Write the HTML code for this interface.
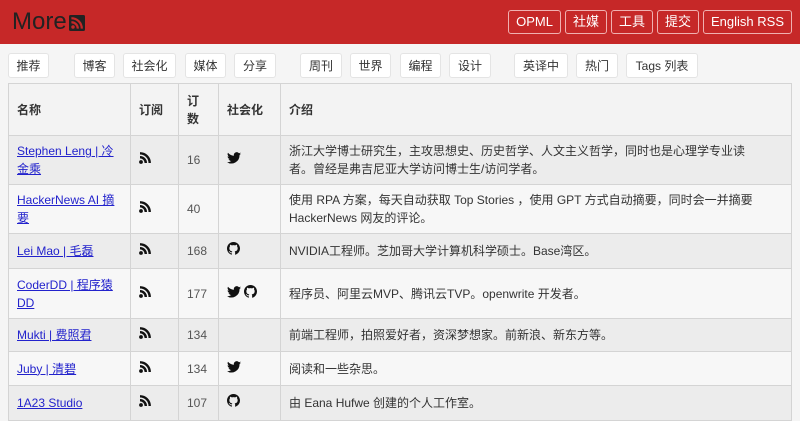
<!DOCTYPE html>
<html><head><meta charset="utf-8">
<style>
*{box-sizing:border-box;margin:0;padding:0}
body{width:800px;height:419px;overflow:hidden;background:#f5f5f5;font-family:"Liberation Sans","Noto Sans CJK SC",sans-serif;font-size:12px;color:#333}
.top{height:44px;background:#c62828;position:relative}
.logo{position:absolute;left:12px;top:7px;font-size:24px;color:#222;display:flex;align-items:center;line-height:30px}
.logo svg{margin-left:2px;margin-top:2px}
.nav{position:absolute;right:8px;top:10px;display:flex;gap:4px}
.nav span{border:1px solid #f0b0b0;border-radius:3px;color:#fff;height:24px;line-height:22px;padding:0 7px;font-size:13px}
.tags{position:absolute;top:53px;left:0;width:800px;height:26px}
.tags span{position:absolute;top:0;height:25px;line-height:24px;background:#fff;border:1px solid #e4e4e4;border-radius:3px;text-align:center;font-size:12px;color:#333}
table{position:absolute;left:8px;top:83px;width:784px;border-collapse:collapse;table-layout:fixed}
td,th{border:1px solid #d4d4d4;padding:0 8px;vertical-align:middle;text-align:left;line-height:18px}
td:last-child{padding-right:30px}
th{font-weight:bold;background:#f3f3f3;height:52px}
tr:nth-child(even) td{background:#ececec}
tr:nth-child(odd) td{background:#f7f7f7}
a{text-decoration:underline;color:#2222cc}
.n{color:#555}
</style></head><body>
<div class="top">
<div class="logo">More<svg width="16" height="16" viewBox="0 0 20 20"><rect width="20" height="20" rx="2" fill="#222"/><circle cx="5" cy="15" r="2.2" fill="#c62828"/><path d="M3 9a8 8 0 0 1 8 8M3 4a13 13 0 0 1 13 13" stroke="#c62828" stroke-width="2.8" fill="none"/></svg></div>
<div class="nav"><span>OPML</span><span>社媒</span><span>工具</span><span>提交</span><span>English RSS</span></div>
</div>
<div class="tags">
<span style="left:8px;width:41px">推荐</span>
<span style="left:74px;width:41px">博客</span>
<span style="left:123px;width:53px">社会化</span>
<span style="left:185px;width:41px">媒体</span>
<span style="left:234px;width:42px">分享</span>
<span style="left:300px;width:42px">周刊</span>
<span style="left:350px;width:41px">世界</span>
<span style="left:400px;width:41px">编程</span>
<span style="left:449px;width:42px">设计</span>
<span style="left:514px;width:54px">英译中</span>
<span style="left:576px;width:42px">热门</span>
<span style="left:626px;width:72px">Tags 列表</span>
</div>
<svg width="0" height="0" style="position:absolute"><defs>
<symbol id="rss" viewBox="0 0 12 12"><circle cx="2" cy="10" r="1.9" fill="#111"/><path d="M1 5.2a5.8 5.8 0 0 1 5.8 5.8M1 1.3a9.7 9.7 0 0 1 9.7 9.7" stroke="#111" stroke-width="2.4" fill="none"/></symbol>
<symbol id="tw" viewBox="0 0 24 20"><path d="M24 2.4c-.9.4-1.8.6-2.8.8 1-.6 1.8-1.600 2.200-2.700-1 .6-2 1-3.100 1.200A4.900 4.900 0 0 0 11.900 6.100 14 14 0 0 1 1.700.9a4.900 4.900 0 0 0 1.500 6.600c-.8 0-1.600-.3-2.200-.6 0 2.400 1.700 4.400 3.900 4.800-.7.2-1.500.2-2.200.1.6 1.900 2.400 3.400 4.600 3.400A9.900 9.900 0 0 1 0 17.200 14 14 0 0 0 21.500 5.400V4.800C22.500 4.200 23.300 3.300 24 2.400Z" fill="#111"/></symbol>
<symbol id="gh" viewBox="0 0 16 16"><path d="M8 0C3.580 0 0 3.580 0 8c0 3.540 2.290 6.530 5.470 7.590.4.070.55-.17.55-.38v-1.340c-2.230.49-2.700-1.070-2.700-1.070-.36-.92-.89-1.170-.89-1.170-.73-.5.06-.49.06-.49.8.06 1.230.83 1.230.83.72 1.220 1.870.87 2.330.66.07-.52.28-.87.51-1.070-1.780-.2-3.640-.89-3.640-3.950 0-.87.31-1.590.82-2.150-.08-.2-.36-1.020.08-2.120 0 0 .67-.21 2.200.82a7.600 7.600 0 0 1 4 0c1.530-1.040 2.200-.82 2.200-.82.44 1.100.16 1.920.08 2.120.51.56.82 1.270.82 2.150 0 3.070-1.870 3.750-3.650 3.950.29.25.54.73.54 1.480v2.200c0 .21.15.46.55.38A8 8 0 0 0 16 8c0-4.420-3.580-8-8-8Z" fill="#111"/></symbol>
</defs></svg>
<table>
<colgroup><col style="width:122px"><col style="width:48px"><col style="width:40px"><col style="width:62px"><col></colgroup>
<tr><th>名称</th><th>订阅</th><th>订<br>数</th><th>社会化</th><th>介绍</th></tr>
<tr style="height:49px"><td><a>Stephen Leng | 冷金乘</a></td><td><svg width="12" height="12"><use href="#rss"/></svg></td><td class="n">16</td><td><svg width="14" height="12"><use href="#tw"/></svg></td><td>浙江大学博士研究生，主攻思想史、历史哲学、人文主义哲学，同时也是心理学专业读者。曾经是弗吉尼亚大学访问博士生/访问学者。</td></tr>
<tr style="height:49px"><td><a>HackerNews AI 摘要</a></td><td><svg width="12" height="12"><use href="#rss"/></svg></td><td class="n">40</td><td></td><td>使用 RPA 方案，每天自动获取 Top Stories ，使用 GPT 方式自动摘要，同时会一并摘要 HackerNews 网友的评论。</td></tr>
<tr style="height:35px"><td><a>Lei Mao | 毛磊</a></td><td><svg width="12" height="12"><use href="#rss"/></svg></td><td class="n">168</td><td><svg width="13" height="13"><use href="#gh"/></svg></td><td>NVIDIA工程师。芝加哥大学计算机科学硕士。Base湾区。</td></tr>
<tr style="height:50px"><td><a>CoderDD | 程序猿DD</a></td><td><svg width="12" height="12"><use href="#rss"/></svg></td><td class="n">177</td><td><svg width="14" height="12"><use href="#tw"/></svg> <svg width="13" height="13"><use href="#gh"/></svg></td><td>程序员、阿里云MVP、腾讯云TVP。openwrite 开发者。</td></tr>
<tr style="height:33px"><td><a>Mukti | 费照君</a></td><td><svg width="12" height="12"><use href="#rss"/></svg></td><td class="n">134</td><td></td><td>前端工程师，拍照爱好者，资深梦想家。前新浪、新东方等。</td></tr>
<tr style="height:34px"><td><a>Juby | 清碧</a></td><td><svg width="12" height="12"><use href="#rss"/></svg></td><td class="n">134</td><td><svg width="14" height="12"><use href="#tw"/></svg></td><td>阅读和一些杂思。</td></tr>
<tr style="height:35px"><td><a>1A23 Studio</a></td><td><svg width="12" height="12"><use href="#rss"/></svg></td><td class="n">107</td><td><svg width="13" height="13"><use href="#gh"/></svg></td><td>由 Eana Hufwe 创建的个人工作室。</td></tr>
</table>
</body></html>
